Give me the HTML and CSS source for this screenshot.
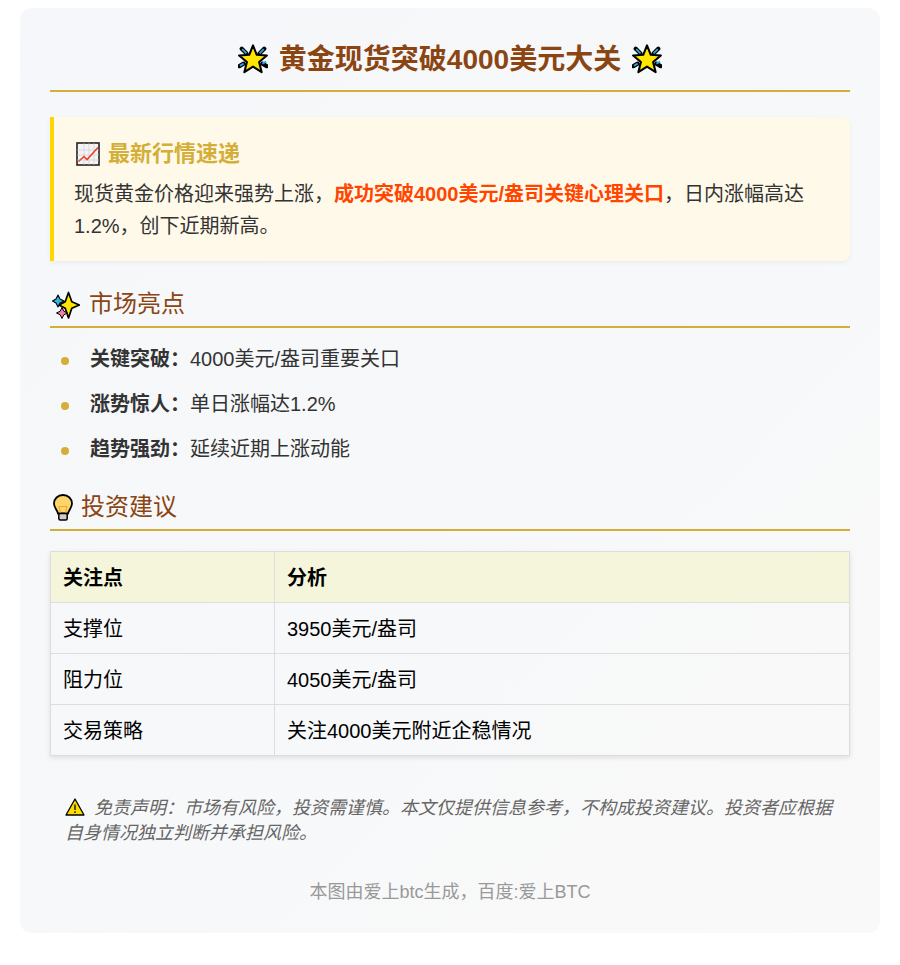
FILE: index.html
```html
<!DOCTYPE html>
<html lang="zh">
<head>
<meta charset="utf-8">
<title>黄金现货突破4000美元大关</title>
<link rel="stylesheet" href="styles.css">
</head>
<body>
<main class="card">
  <h1 class="title">
    <svg class="emoji-title" viewBox="0 0 32 32"><use href="#glow"/></svg>
    <span>黄金现货突破4000美元大关</span>
    <svg class="emoji-title" viewBox="0 0 32 32"><use href="#glow"/></svg>
  </h1>

  <section class="news">
    <h2 class="news-head">
      <svg class="emoji-chart" viewBox="0 0 24 24">
        <rect x="1" y="1" width="22" height="22" fill="#f4f4f4" stroke="#222" stroke-width="1.6"/>
        <path d="M1.5 8h21M1.5 13h21M1.5 18h21M8 1.5v21M13 1.5v21M18 1.5v21" stroke="#d8d8d8" stroke-width="1" fill="none"/>
        <path d="M2.5 19.5 8 14.5l3 3L22 5.5" stroke="#e8432a" stroke-width="1.6" fill="none"/>
      </svg>
      <span>最新行情速递</span>
    </h2>
    <p class="news-text">现货黄金价格迎来强势上涨，<strong class="hot">成功突破4000美元/盎司关键心理关口</strong>，日内涨幅高达1.2%，创下近期新高。</p>
  </section>

  <h2 class="section-head">
    <svg class="emoji-sparkle" viewBox="0 0 28 28">
      <path d="M16.500 1.500 19.800 10.700 27.300 14l-7.500 3.300-3.300 9.700-3.300-9.700L7 14l6.200-3.300z" fill="#ffe600" stroke="#000" stroke-width="1.700" stroke-linejoin="round"/>
      <path d="M6 4 8 8 12 10 8 12 6 16 4 12 .5 10 4 8z" fill="#2fb8e0" stroke="#000" stroke-width="1.100" stroke-linejoin="round"/>
      <path d="M10 16.500 11.800 20.200 15.500 22 11.800 23.800 10 27.500 8.200 23.800 4.500 22 8.200 20.200z" fill="#f27eb0" stroke="#000" stroke-width="1" stroke-linejoin="round"/>
    </svg>
    <span>市场亮点</span>
  </h2>
  <ul class="points">
    <li><strong>关键突破：</strong>4000美元/盎司重要关口</li>
    <li><strong>涨势惊人：</strong>单日涨幅达1.2%</li>
    <li><strong>趋势强劲：</strong>延续近期上涨动能</li>
  </ul>

  <h2 class="section-head section-advice">
    <svg class="emoji-bulb" viewBox="0 0 20 27">
      <path d="M10 1C4.800 1 1 4.800 1 9.500c0 4.500 3.200 6 4 10h10c.8-4 4-5.500 4-10C19 4.800 15.200 1 10 1z" fill="#ffd56b" stroke="#000" stroke-width="1.800"/>
      <path d="M7.500 19 6 12.500h8L12.500 19" fill="none" stroke="#eda72c" stroke-width="1.100"/>
      <rect x="5.800" y="19.500" width="8.400" height="6.500" rx="1.500" fill="#ccc" stroke="#000" stroke-width="1.500"/>
    </svg>
    <span>投资建议</span>
  </h2>
  <table class="advice">
    <thead>
      <tr><th class="col-a">关注点</th><th>分析</th></tr>
    </thead>
    <tbody>
      <tr><td>支撑位</td><td>3950美元/盎司</td></tr>
      <tr><td>阻力位</td><td>4050美元/盎司</td></tr>
      <tr><td>交易策略</td><td>关注4000美元附近企稳情况</td></tr>
    </tbody>
  </table>

  <p class="disclaimer"><svg class="emoji-warn" viewBox="0 0 20 18"><path d="M10 1 19 17H1z" fill="#ffdc00" stroke="#000" stroke-width="1.300" stroke-linejoin="round"/><path d="M10 6.500v5.500M10 13.300v1.700" stroke="#222" stroke-width="1.500"/></svg> 免责声明：市场有风险，投资需谨慎。本文仅提供信息参考，不构成投资建议。投资者应根据自身情况独立判断并承担风险。</p>

  <p class="footer">本图由爱上btc生成，百度:爱上BTC</p>
</main>

<svg class="defs" width="0" height="0">
  <defs>
    <g id="glow">
      <path d="M9 10 4 5M23 10l5-5M6 21l-4.500 2.500M26 21l4.500 2.500" stroke="#000" stroke-width="4.500" stroke-linecap="round"/>
      <path d="M9 10 4.500 5.500M23 10l4.500-4.500M6 21l-4 2.200M26 21l4-2.200" stroke="#2aa8d8" stroke-width="2"/>
      <path d="M16 1.500 20 11.500l10.800.8-8.300 6.900 2.700 10.800-9.200-5.900-9.200 5.900 2.700-10.800-8.300-6.900 10.800-.8z" fill="#ffe600" stroke="#000" stroke-width="2.200" stroke-linejoin="round"/>
    </g>
  </defs>
</svg>
</body>
</html>
```
FILE: styles.css
```css
* { box-sizing: border-box; }
html, body { margin: 0; background: #fff; }
body {
  padding: 8px 20px 0;
  font-family: "Liberation Sans", "Noto Sans CJK SC", sans-serif;
  color: #333;
  font-size: 20px;
  line-height: 1.6;
}
.defs { position: absolute; }
.card {
  height: 925px;
  padding: 30px;
  border-radius: 12px;
  background: linear-gradient(135deg, #f5f7fa 0%, #f9f9f9 100%);
}
.title {
  margin: 0 0 25px;
  height: 54px;
  padding-bottom: 8px;
  border-bottom: 2px solid #d4af37;
  display: flex;
  justify-content: center;
  align-items: center;
  gap: 11px;
  font-size: 28px;
  line-height: 40px;
  font-weight: 700;
  color: #8b4513;
}
.emoji-title { width: 30px; height: 30px; flex: none; margin-top: -2px; }
.news {
  height: 144px;
  padding: 19px 20px 0;
  border-left: 4px solid #ffd700;
  border-radius: 0 8px 8px 0;
  background: #fff9ea;
  box-shadow: 0 2px 5px rgba(0, 0, 0, .05);
}
.news-head {
  margin: 0 0 6px;
  display: flex;
  align-items: center;
  gap: 8px;
  font-size: 22px;
  line-height: 36px;
  color: #d4af37;
}
.emoji-chart { width: 24px; height: 24px; margin-left: 2px; flex: none; }
.news-text { margin: 0; line-height: 32px; }
.hot { color: #ff4500; }
.section-head {
  margin: 25px 0 0;
  height: 42px;
  display: flex;
  align-items: center;
  gap: 9px;
  padding-bottom: 3px;
  border-bottom: 2px solid #d4af37;
  font-size: 24px;
  font-weight: 400;
  color: #8b4513;
}
.emoji-sparkle { width: 28px; height: 28px; margin-left: 2px; flex: none; }
.emoji-bulb { width: 20px; height: 27px; flex: none; margin-left: 3px; margin-right: -1px; }
.points { margin: 0; padding: 9px 0 0; list-style: none; }
.points li {
  position: relative;
  height: 45px;
  padding-left: 40px;
  line-height: 45px;
}
.points li::before {
  content: "";
  position: absolute;
  left: 11px;
  top: 20px;
  width: 8px;
  height: 8px;
  border-radius: 50%;
  background: #d4af37;
}
.section-advice { margin-top: 17px; }
.advice {
  width: 100%;
  margin-top: 20px;
  border-collapse: collapse;
  table-layout: fixed;
  color: #000;
  box-shadow: 0 2px 5px rgba(0, 0, 0, .1);
}
.advice th, .advice td {
  height: 51px;
  padding: 2px 12px 0;
  border: 1px solid #ddd;
  text-align: left;
  line-height: 30px;
}
.advice th { background: #f5f5dc; font-weight: 700; }
.col-a { width: 224px; }
.disclaimer {
  margin: 30px 0 0;
  padding: 10px 15px;
  font-size: 18px;
  line-height: 25px;
  font-style: italic;
  color: #666;
}
.emoji-warn { width: 20px; height: 18px; vertical-align: -2px; margin-right: 4px; }
.footer {
  margin: 22px 0 0;
  text-align: center;
  font-size: 18px;
  line-height: 28px;
  color: #999;
}
```
